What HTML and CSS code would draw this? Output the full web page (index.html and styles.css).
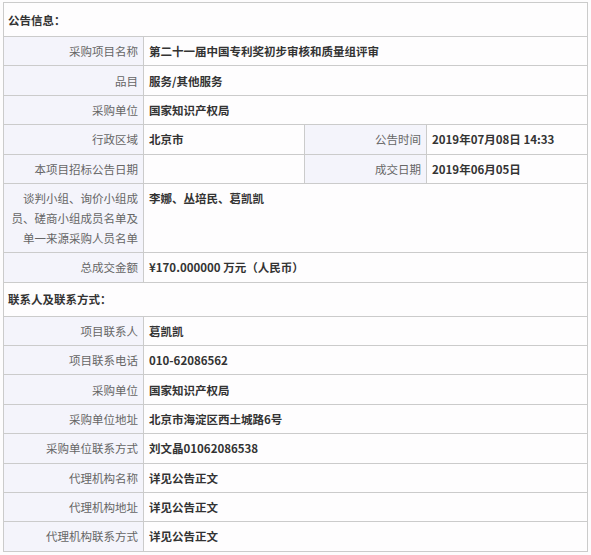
FILE: index.html
```html
<!DOCTYPE html>
<html lang="zh-CN">
<head>
<meta charset="utf-8">
<link rel="stylesheet" href="styles.css">
</head>
<body>
<div class="page">
<table class="info">
  <colgroup>
    <col class="c1"><col class="c2"><col class="c3"><col class="c4">
  </colgroup>
  <tr><td class="sec" colspan="4">公告信息：</td></tr>
  <tr><td class="lbl">采购项目名称</td><td class="val" colspan="3">第二十一届中国专利奖初步审核和质量组评审</td></tr>
  <tr><td class="lbl">品目</td><td class="val" colspan="3">服务/其他服务</td></tr>
  <tr><td class="lbl">采购单位</td><td class="val" colspan="3">国家知识产权局</td></tr>
  <tr><td class="lbl">行政区域</td><td class="val">北京市</td><td class="lbl">公告时间</td><td class="val">2019年07月08日 14:33</td></tr>
  <tr><td class="lbl">本项目招标公告日期</td><td class="val"></td><td class="lbl">成交日期</td><td class="val">2019年06月05日</td></tr>
  <tr class="top"><td class="lbl">谈判小组、询价小组成员、磋商小组成员名单及单一来源采购人员名单</td><td class="val" colspan="3">李娜、丛培民、葛凯凯</td></tr>
  <tr><td class="lbl">总成交金额</td><td class="val" colspan="3">¥170.000000 万元（人民币）</td></tr>
  <tr><td class="sec" colspan="4">联系人及联系方式：</td></tr>
  <tr><td class="lbl">项目联系人</td><td class="val" colspan="3">葛凯凯</td></tr>
  <tr><td class="lbl">项目联系电话</td><td class="val" colspan="3">010-62086562</td></tr>
  <tr><td class="lbl">采购单位</td><td class="val" colspan="3">国家知识产权局</td></tr>
  <tr><td class="lbl">采购单位地址</td><td class="val" colspan="3">北京市海淀区西土城路6号</td></tr>
  <tr><td class="lbl">采购单位联系方式</td><td class="val" colspan="3">刘文晶01062086538</td></tr>
  <tr><td class="lbl">代理机构名称</td><td class="val" colspan="3">详见公告正文</td></tr>
  <tr><td class="lbl">代理机构地址</td><td class="val" colspan="3">详见公告正文</td></tr>
  <tr><td class="lbl">代理机构联系方式</td><td class="val" colspan="3">详见公告正文</td></tr>
</table>
</div>
</body>
</html>
```

FILE: styles.css
```css
html, body {
  margin: 0;
  padding: 0;
  background: #fdfcfd;
}
.page {
  padding: 2px 4px 0 3px;
}
.info {
  width: 584px;
  border-collapse: collapse;
  table-layout: fixed;
  font-family: "Noto Sans CJK SC", "Noto Sans", sans-serif;
  font-size: 11.5px;
  line-height: 20px;
  color: #333;
  border: 1px solid #c6c6c6;
}
.c1 { width: 140px; }
.c2 { width: 161px; }
.c3 { width: 122px; }
.c4 { width: 161px; }
.info td {
  border: 1px solid #cbcbcb;
  padding: 4.2px 5px;
  vertical-align: middle;
}
.info .sec {
  background: #fefdfe;
  font-weight: bold;
  padding: 6.5px 4px;
  color: #333;
}
.info .lbl {
  background: #f4f4fb;
  color: #666;
  text-align: right;
}
.info .val {
  background: #fefdfe;
  font-weight: bold;
  color: #333;
}
.info tr.top td {
  vertical-align: top;
}
```
